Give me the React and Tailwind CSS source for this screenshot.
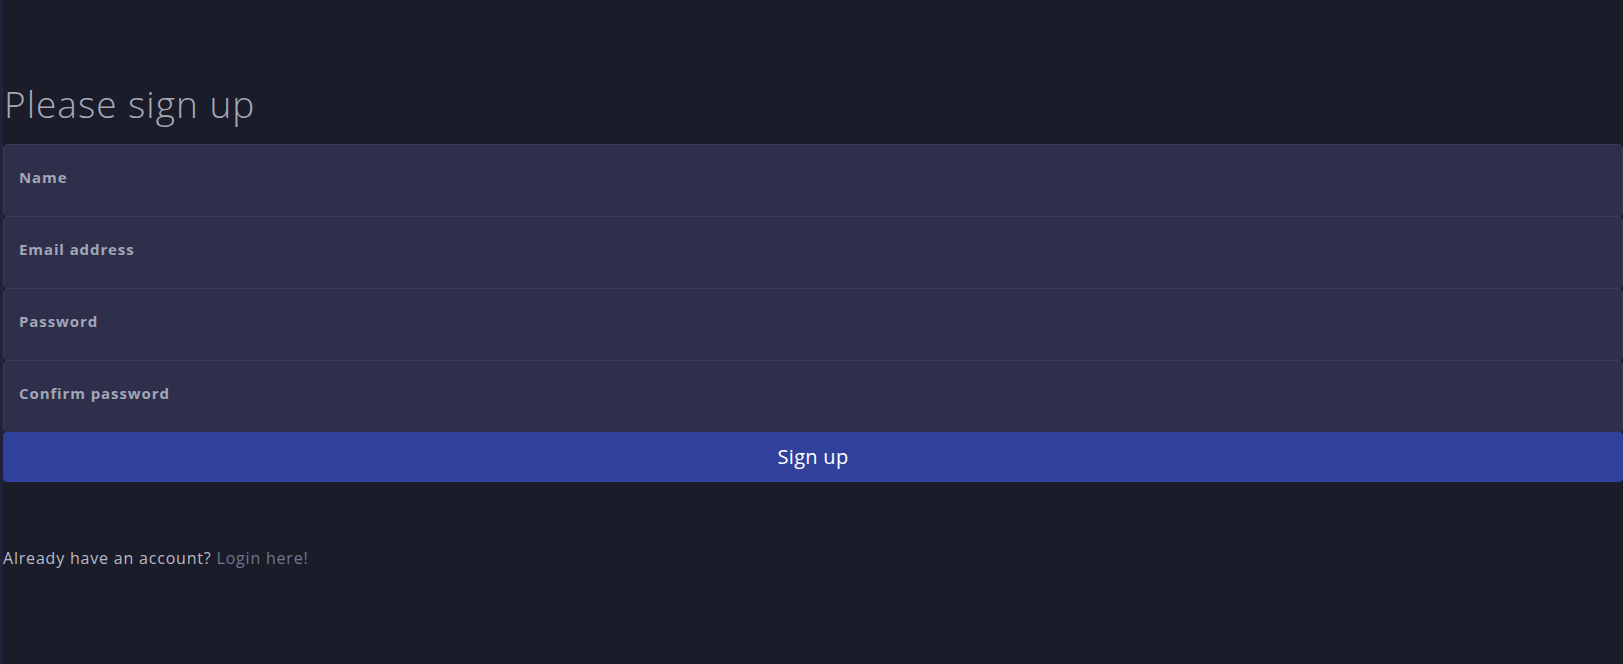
export default function App() {
  const fields = ['Name', 'Email address', 'Password', 'Confirm password']

  return (
    <div
      className="min-h-screen bg-[#1b1c29] border-l-[3px] border-[#22233a]"
      style={{ fontFamily: '"Open Sans", "Noto Sans", sans-serif' }}
    >
      <div className="pt-[82px]">
        <h1 className="text-[37px] font-light leading-[44px] tracking-[1px] text-[#a6a9b6] mb-[18px] pl-px">
          Please sign up
        </h1>

        <form onSubmit={(e) => e.preventDefault()}>
          {fields.map((f, i) => (
            <div
              key={f}
              className={
                'h-[73px] bg-[#2e2f4b] border border-[#383a5a] rounded-[5px] px-[15px] pt-[21px] ' +
                (i > 0 ? '-mt-px' : '')
              }
            >
              <label className="block text-[15px] leading-[22px] font-bold tracking-[0.9px] text-[#a3a6b8]">{f}</label>
            </div>
          ))}

          <button
            type="submit"
            className="w-full h-[50px] bg-[#30409b] rounded-[4px] text-white text-[20px] leading-[50px] tracking-[0.3px] -mt-px"
          >
            Sign up
          </button>
        </form>

        <p className="mt-[64px] text-[16px] leading-[24px] tracking-[0.8px] text-[#b7bac6]">
          Already have an account?{' '}
          <a href="#" className="text-[#6a7892]">Login here!</a>
        </p>
      </div>
    </div>
  )
}
